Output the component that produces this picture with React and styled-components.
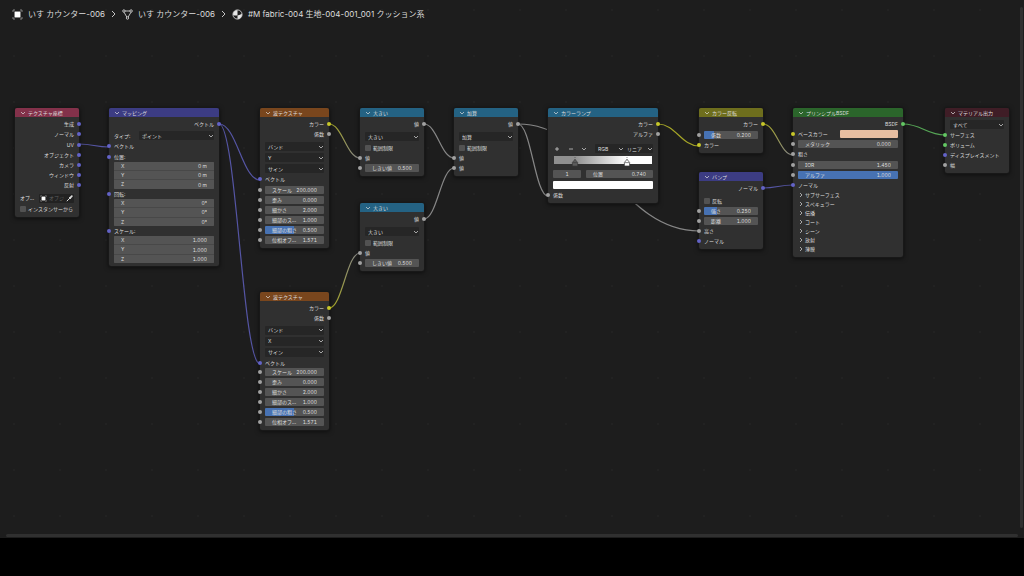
import React, { useId } from 'react';
import styled, { createGlobalStyle } from 'styled-components';

const colors = {
    grey: '#a1a1a1',
    yellow: '#c7c729',
    blue: '#6363c7',
    green: '#63c763',
};

const links = [
    { from: [79, 144], to: [109, 147], a: 'blue', b: 'blue' },
    { from: [219, 124], to: [260, 180], a: 'blue', b: 'blue' },
    { from: [219, 124], to: [260, 364], a: 'blue', b: 'blue' },
    { from: [329, 124], to: [360, 158], a: 'yellow', b: 'grey' },
    { from: [329, 308], to: [360, 253], a: 'yellow', b: 'grey' },
    { from: [424, 124], to: [454, 158], a: 'grey', b: 'grey' },
    { from: [424, 219], to: [454, 168], a: 'grey', b: 'grey' },
    { from: [518, 124], to: [548, 196], a: 'grey', b: 'grey' },
    { from: [518, 124], to: [699, 231], a: 'grey', b: 'grey' },
    { from: [658, 124], to: [699, 146], a: 'yellow', b: 'yellow' },
    { from: [763, 124], to: [793, 155], a: 'yellow', b: 'grey' },
    { from: [763, 188], to: [793, 185], a: 'blue', b: 'blue' },
    { from: [903, 124], to: [945, 135], a: 'green', b: 'green' },
];

const linkPath = ({ from, to }) => {
    const bend = (to[0] - from[0]) * 0.43;
    return `M${from[0]} ${from[1]} C${from[0] + bend} ${from[1]} ${to[0] - bend} ${to[1]} ${to[0]} ${to[1]}`;
};

export default function App() {
    return (
        <Page>
            <GlobalStyle />
            <Editor>
                <Breadcrumb>
                    <Crumb href="#object"><ObjectIcon size={11} />いす カウンター-006</Crumb>
                    <CrumbArrow />
                    <Crumb href="#mesh"><MeshIcon />いす カウンター-006</Crumb>
                    <CrumbArrow />
                    <Crumb href="#material"><MaterialIcon />#M fabric-004 生地-004-001_001 クッション系</Crumb>
                </Breadcrumb>
                <Links />
                <Node x={15} y={108} w={64} h={109} color="#83314a" title="テクスチャ座標">
                    <Out color="blue">生成</Out>
                    <Out color="blue">ノーマル</Out>
                    <Out color="blue">UV</Out>
                    <Out color="blue">オブジェクト</Out>
                    <Out color="blue">カメラ</Out>
                    <Out color="blue">ウィンドウ</Out>
                    <Out color="blue">反射</Out>
                    <Gap $h={2} />
                    <Row $h={11}>
                        <PropLabel $w={19}>オブ...</PropLabel>
                        <ObjectPicker>
                            <ObjectIcon size={7} />
                            <input aria-label="オブ..." placeholder="オブジ" />
                            <PipetteIcon />
                        </ObjectPicker>
                    </Row>
                    <Check>インスタンサーから</Check>
                </Node>
                <Node x={109} y={108} w={110} h={158} color="#3c3c83" title="マッピング">
                    <Out color="blue">ベクトル</Out>
                    <Gap $h={1} />
                    <Choice label="タイプ:" value="ポイント" />
                    <In color="blue">ベクトル</In>
                    <Vector label="位置:" value="0 m" />
                    <Vector label="回転:" value="0°" />
                    <Vector label="スケール:" value="1.000" />
                </Node>
                <WaveNode y={108} h={140} axis="Y" />
                <WaveNode y={292} h={138} axis="X" />
                <GreaterNode y={108} />
                <GreaterNode y={203} />
                <Node x={454} y={108} w={64} h={68} color="#246283" title="加算">
                    <Out>値</Out>
                    <Gap $h={2} />
                    <Choice value="加算" />
                    <Check>範囲制限</Check>
                    <In>値</In>
                    <In>値</In>
                </Node>
                <Node x={548} y={108} w={110} h={95} color="#246283" title="カラーランプ">
                    <Out color="yellow">カラー</Out>
                    <Out>アルファ</Out>
                    <Gap $h={4} />
                    <Row $h={11}>
                        <RampTools>
                            <button aria-label="+"><Glyph d="M1 3h4M3 1v4" /></button>
                            <button aria-label="-"><Glyph d="M1 3h4" /></button>
                            <button aria-label="v"><Glyph d="M1 2l2 2 2-2" /></button>
                        </RampTools>
                        <Dropdown value="RGB" />
                        <Dropdown value="リニア" />
                    </Row>
                    <RampRow>
                        <Ramp>
                            <RampStop color="#5c5c5c" at={21} />
                            <RampStop color="#ffffff" at={74} />
                        </Ramp>
                    </RampRow>
                    <Row $h={11}>
                        <StopIndex aria-label="1" defaultValue="1" />
                        <Field label="位置" value="0.740" />
                    </Row>
                    <Row $h={11}>
                        <Swatch aria-label="カラー" type="color" defaultValue="#ffffff" />
                    </Row>
                    <In>係数</In>
                </Node>
                <Node x={699} y={108} w={64} h={45} color="#6e6e1d" title="カラー反転">
                    <Out color="yellow">カラー</Out>
                    <Gap $h={1} />
                    <InField label="係数" value="0.200" fill={18} />
                    <In color="yellow">カラー</In>
                </Node>
                <Node x={699} y={172} w={64} h={77} color="#3c3c83" title="バンプ">
                    <Out color="blue">ノーマル</Out>
                    <Gap $h={3} />
                    <Check>反転</Check>
                    <InField label="強さ" value="0.250" fill={24} />
                    <InField label="距離" value="1.000" />
                    <In>高さ</In>
                    <In color="blue">ノーマル</In>
                </Node>
                <Node x={793} y={108} w={110} h={149} color="#2b652b" title="プリンシプルBSDF">
                    <Out color="green">BSDF</Out>
                    <Row>
                        <Socket $color={colors.yellow} />
                        <PropLabel $w={42}>ベースカラー</PropLabel>
                        <Swatch aria-label="ベースカラー" type="color" defaultValue="#e7bea1" />
                    </Row>
                    <InField label="メタリック" value="0.000" />
                    <In>粗さ</In>
                    <InField label="IOR" value="1.450" />
                    <InField label="アルファ" value="1.000" fill={100} />
                    <In color="blue">ノーマル</In>
                    {['サブサーフェス', 'スペキュラー', '伝播', 'コート', 'シーン', '放射', '薄膜'].map((name) => (
                        <PanelToggle key={name}><Glyph d="M2 1l2 2-2 2" />{name}</PanelToggle>
                    ))}
                </Node>
                <Node x={945} y={108} w={64} h={65} color="#3f1d26" title="マテリアル出力">
                    <Choice value="すべて" />
                    <In color="green">サーフェス</In>
                    <In color="green">ボリューム</In>
                    <In color="blue">ディスプレイスメント</In>
                    <In>幅</In>
                </Node>
                <ScrollY />
                <ScrollX />
            </Editor>
            <StatusBar />
        </Page>
    );
}

function WaveNode({ y, h, axis }) {
    return (
        <Node x={260} y={y} w={69} h={h} color="#79461d" title="波テクスチャ">
            <Out color="yellow">カラー</Out>
            <Out>係数</Out>
            <Gap $h={2} />
            <Choice value="バンド" />
            <Choice value={axis} />
            <Choice value="サイン" />
            <In color="blue">ベクトル</In>
            <InField label="スケール" value="200.000" />
            <InField label="歪み" value="0.000" />
            <InField label="細かさ" value="2.000" />
            <InField label="細部のス..." value="1.000" />
            <InField label="細部の粗さ" value="0.500" fill={50} />
            <InField label="位相オフ..." value="1.571" />
        </Node>
    );
}

function GreaterNode({ y }) {
    return (
        <Node x={360} y={y} w={64} h={68} color="#246283" title="大きい">
            <Out>値</Out>
            <Gap $h={2} />
            <Choice value="大きい" />
            <Check>範囲制限</Check>
            <In>値</In>
            <InField label="しきい値" value="0.500" />
        </Node>
    );
}

function Node({ x, y, w, h, color, title, children }) {
    return (
        <NodeBox $x={x} $y={y} $w={w} $h={h}>
            <NodeTitle $color={color}><Glyph d="M1 2l2 2 2-2" />{title}</NodeTitle>
            <NodeBody>{children}</NodeBody>
        </NodeBox>
    );
}

function Out({ color = 'grey', children }) {
    return <Row $end>{children}<Socket $out $color={colors[color]} /></Row>;
}

function In({ color = 'grey', children }) {
    return <Row><Socket $color={colors[color]} />{children}</Row>;
}

function InField(props) {
    return <Row><Socket $color={colors.grey} /><Field {...props} /></Row>;
}

function Field({ label, value, fill = 0 }) {
    const id = useId();
    return (
        <FieldBox $fill={fill}>
            <label htmlFor={id}>{label}</label>
            <input id={id} defaultValue={value} />
        </FieldBox>
    );
}

function Vector({ label, value }) {
    return (
        <>
            <In color="blue">{label}</In>
            <VectorBox>
                <Field label="X" value={value} />
                <Field label="Y" value={value} />
                <Field label="Z" value={value} />
            </VectorBox>
        </>
    );
}

function Choice({ label, value }) {
    return (
        <Row $h={11}>
            {label && <PropLabel $w={25}>{label}</PropLabel>}
            <Dropdown value={value} label={label} />
        </Row>
    );
}

function Dropdown({ value, label }) {
    return (
        <DropdownBox>
            <select aria-label={label || value} defaultValue={value}>
                <option>{value}</option>
            </select>
            <Glyph d="M1 2l2 2 2-2" />
        </DropdownBox>
    );
}

function Check({ children }) {
    return (
        <Row>
            <CheckLabel><input type="checkbox" />{children}</CheckLabel>
        </Row>
    );
}

function RampStop({ color, at }) {
    return (
        <StopMark $at={at} viewBox="0 0 8 12">
            <path d="M4 0v5" stroke="#444" strokeWidth=".6" strokeDasharray="1 1" />
            <path d="M4 4.400l2.600 3v3.600h-5.200v-3.600z" fill={color} stroke="#3a3a3a" strokeWidth=".7" />
            <path d="M1.800 7.600h4.400" stroke="#3a3a3a" strokeWidth=".6" />
        </StopMark>
    );
}

function Links() {
    return (
        <LinkLayer>
            <defs>
                {links.map((l, i) => (
                    <linearGradient key={i} id={`link${i}`} gradientUnits="userSpaceOnUse"
                        x1={l.from[0]} y1={l.from[1]} x2={l.to[0]} y2={l.to[1]}>
                        <stop offset="0" stopColor={colors[l.a]} />
                        <stop offset="1" stopColor={colors[l.b]} />
                    </linearGradient>
                ))}
            </defs>
            {links.map((l, i) => <path key={i} d={linkPath(l)} stroke={`url(#link${i})`} />)}
        </LinkLayer>
    );
}

function Glyph({ d }) {
    return (
        <svg width="6" height="6" viewBox="0 0 6 6" fill="none" stroke="currentColor" strokeWidth=".7">
            <path d={d} />
        </svg>
    );
}

function CrumbArrow() {
    return (
        <svg width="5" height="8" viewBox="0 0 5 8" fill="none" stroke="#c4c4c4" strokeWidth="1">
            <path d="M1 1l3 3-3 3" />
        </svg>
    );
}

function ObjectIcon({ size }) {
    return (
        <svg width={size} height={size} viewBox="0 0 11 11" fill="none" stroke="#8c8c8c" strokeWidth=".9">
            <path d="M1 3V1h2M8 1h2v2M10 8v2H8M3 10H1V8" />
            <rect x="3" y="3" width="5" height="5" fill="#fff" stroke="#fff" />
        </svg>
    );
}

function MeshIcon() {
    return (
        <svg width="11" height="11" viewBox="0 0 11 11" fill="none" stroke="#d0d0d0" strokeWidth=".9">
            <path d="M3 2h5M2 3.200l2.800 4.800M9 3.200L6.200 8" />
            <circle cx="1.900" cy="2" r="1.200" />
            <circle cx="9.100" cy="2" r="1.200" />
            <circle cx="5.500" cy="9" r="1.200" />
        </svg>
    );
}

function MaterialIcon() {
    return (
        <svg width="11" height="11" viewBox="0 0 11 11">
            <circle cx="5.500" cy="5.500" r="4.600" fill="#1d1d1d" stroke="#e6e6e6" strokeWidth=".8" />
            <path d="M5.500 1a4.500 4.500 0 0 0-4.400 5q2.200.9 4.400.4z" fill="#e6e6e6" />
            <path d="M5.500 6.400q2.600-.4 4.400-1.600a4.500 4.500 0 0 1-4.400 5.200z" fill="#e6e6e6" />
        </svg>
    );
}

function PipetteIcon() {
    return (
        <svg width="7" height="7" viewBox="0 0 7 7" fill="none" stroke="#dcdcdc">
            <path d="M.8 6.200L4 3" strokeWidth="1" />
            <path d="M3 2l2 2" strokeWidth=".8" />
            <path d="M4.200 2.800L5.800 1.200" strokeWidth="1.800" strokeLinecap="round" />
        </svg>
    );
}

const GlobalStyle = createGlobalStyle`
    * {
        box-sizing: border-box;
    }
    body {
        margin: 0;
        background: #000;
    }
    button, input, select {
        margin: 0;
        padding: 0;
        border: 0;
        outline: 0;
        border-radius: 0;
        background: none;
        color: inherit;
        font: inherit;
        font-feature-settings: inherit;
        appearance: none;
    }
    svg {
        flex: none;
        display: block;
    }
`;

const Page = styled.div`
    display: flex;
    flex-direction: column;
    min-height: 100vh;
    color: #dedede;
    font-family: Inter, "Noto Sans CJK JP", sans-serif;
    font-size: 5px;
    font-feature-settings: "tnum", "cv08";
    line-height: 8px;
    white-space: nowrap;
`;

const Editor = styled.main`
    position: relative;
    flex: 1;
    overflow: hidden;
    background-color: #1d1d1d;
    background-image: radial-gradient(circle at 1px 1px, #222 1px, transparent 1px);
    background-size: 46px 46px;
    background-position: 13px 9px;
`;

const StatusBar = styled.footer`
    height: 38px;
    background: #000;
`;

const Breadcrumb = styled.nav`
    display: flex;
    align-items: center;
    gap: 6px;
    padding: 8px 12px;
`;

const Crumb = styled.a`
    display: flex;
    align-items: center;
    gap: 5px;
    color: #dedede;
    font-size: 8px;
    font-feature-settings: normal;
    line-height: 12px;
    text-decoration: none;
`;

const LinkLayer = styled.svg`
    position: absolute;
    inset: 0;
    width: 100%;
    height: 100%;
    fill: none;
    stroke-width: 1.2px;
    opacity: .8;
`;

const NodeBox = styled.section`
    position: absolute;
    left: ${(p) => p.$x}px;
    top: ${(p) => p.$y}px;
    display: flex;
    flex-direction: column;
    width: ${(p) => p.$w}px;
    height: ${(p) => p.$h}px;
    border-radius: 2px;
    background: #303030;
    box-shadow: 0 0 0 1px #181818, 0 1px 4px 1px rgba(0,0,0,.5);
`;

const NodeTitle = styled.button`
    display: flex;
    align-items: center;
    gap: 2px;
    height: 9px;
    padding-left: 5px;
    border-radius: 2px 2px 0 0;
    background: ${(p) => p.$color};
`;

const NodeBody = styled.div`
    flex: 1;
    display: flex;
    flex-direction: column;
    min-height: 0;
    padding: 2px 5px 3px;
`;

const Row = styled.div`
    position: relative;
    flex: 1 1 ${(p) => p.$h || 10}px;
    display: flex;
    align-items: center;
    justify-content: ${(p) => (p.$end ? 'flex-end' : 'flex-start')};
    min-height: 0;
`;

const Gap = styled.div`
    flex: none;
    height: ${(p) => p.$h}px;
`;

const Socket = styled.i`
    position: absolute;
    top: calc(50% - 2px);
    ${(p) => (p.$out ? 'right' : 'left')}: -7px;
    width: 4px;
    height: 4px;
    border-radius: 50%;
    background: ${(p) => p.$color};
`;

const PropLabel = styled.span`
    flex: none;
    width: ${(p) => p.$w}px;
`;

const FieldBox = styled.div`
    flex: 1;
    display: flex;
    justify-content: space-between;
    min-width: 0;
    height: 8px;
    padding: 0 7px;
    border-radius: 1px;
    background: linear-gradient(90deg, #4772b3 ${(p) => p.$fill}%, #545454 ${(p) => p.$fill}%);
    input {
        flex: 1;
        width: 0;
        text-align: right;
    }
`;

const VectorBox = styled.div`
    flex: none;
    display: flex;
    flex-direction: column;
    height: 27px;
    border-radius: 1px;
    overflow: hidden;
    background: #484848;
    gap: 1px;
    ${FieldBox} {
        border-radius: 0;
    }
`;

const DropdownBox = styled.div`
    flex: 1;
    display: flex;
    align-items: center;
    min-width: 0;
    height: 9px;
    padding: 0 0 0 3px;
    border-radius: 1px;
    background: #262626;
    select {
        flex: 1;
        width: 0;
    }
`;

const CheckLabel = styled.label`
    display: flex;
    align-items: center;
    gap: 2px;
    input {
        width: 6px;
        height: 6px;
        border-radius: 1px;
        background: #525252;
    }
`;

const ObjectPicker = styled.div`
    flex: 1;
    display: flex;
    align-items: center;
    min-width: 0;
    gap: 2px;
    height: 9px;
    padding: 0 1px;
    border-radius: 1px;
    background: #222;
    input {
        flex: 1;
        width: 0;
    }
    input::placeholder {
        color: #5e5e5e;
    }
`;

const RampTools = styled.div`
    flex: none;
    display: flex;
    justify-content: space-between;
    width: 42px;
    padding: 0 8px 0 1px;
`;

const RampRow = styled.div`
    flex: none;
    height: 14px;
    padding: 2px 1px 0;
`;

const Ramp = styled.div`
    position: relative;
    height: 8px;
    background: linear-gradient(90deg, #8f8f8f 21%, #fff 74%);
`;

const StopMark = styled.svg`
    position: absolute;
    left: calc(${(p) => p.$at}% - 4px);
    top: -1px;
    width: 8px;
    height: 12px;
    fill: none;
`;

const StopIndex = styled.input`
    width: 28px;
    height: 8px;
    margin-right: 5px;
    border-radius: 1px;
    background: #545454;
    text-align: center;
`;

const Swatch = styled.input`
    flex: 1;
    width: 0;
    height: 8px;
    border-radius: 1px;
    overflow: hidden;
    &::-webkit-color-swatch-wrapper {
        padding: 0;
    }
    &::-webkit-color-swatch {
        border: 0;
    }
`;

const PanelToggle = styled.button`
    flex: 1 1 9px;
    display: flex;
    align-items: center;
    gap: 1px;
    min-height: 0;
    padding-left: 0;
`;

const ScrollY = styled.div`
    position: absolute;
    top: 7px;
    right: 1px;
    bottom: 10px;
    width: 3px;
    border-radius: 2px;
    background: #303030;
`;

const ScrollX = styled.div`
    position: absolute;
    left: 6px;
    right: 6px;
    bottom: 1px;
    height: 3px;
    border-radius: 2px;
    background: #303030;
`;
